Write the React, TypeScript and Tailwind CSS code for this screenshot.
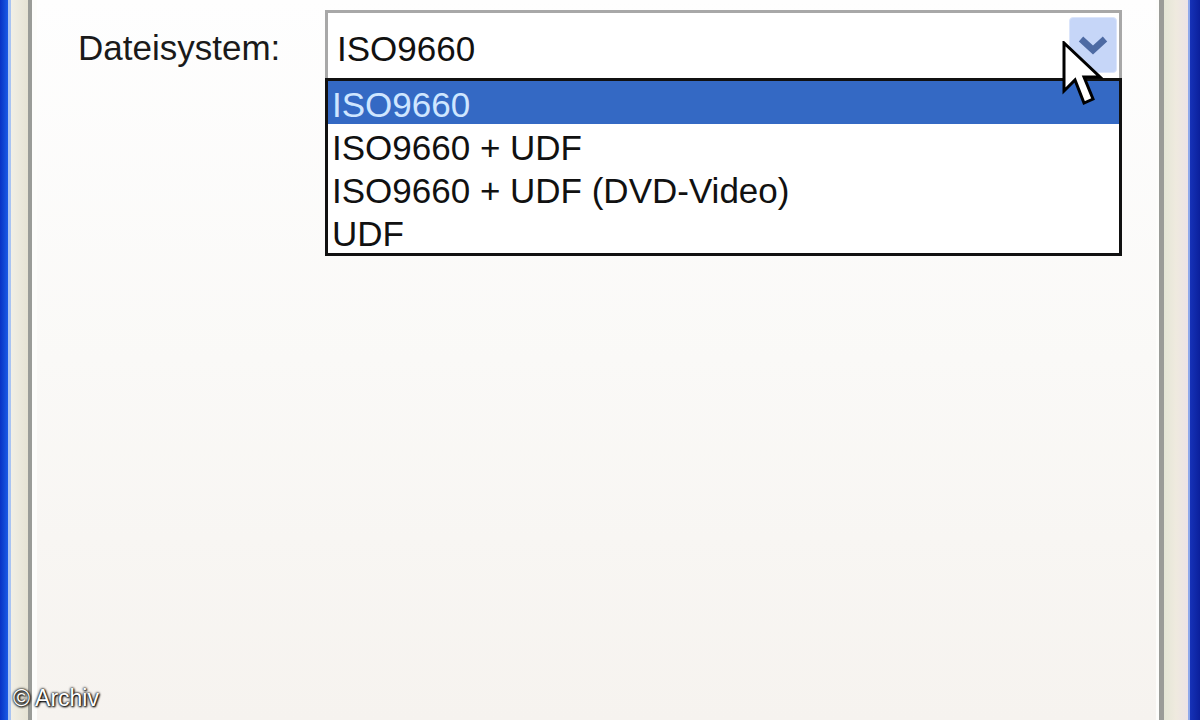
import React from "react";

const options = ["ISO9660", "ISO9660 + UDF", "ISO9660 + UDF (DVD-Video)", "UDF"];

const Chevron: React.FC = () => (
  <svg width="30" height="22" viewBox="0 0 30 22" aria-hidden="true">
    <path d="M3 4 L15 15 L27 4" fill="none" stroke="#4d6aa3" strokeWidth="6.5" strokeLinejoin="miter" />
  </svg>
);

const Cursor: React.FC = () => (
  <svg width="44" height="72" viewBox="0 0 44 72" aria-hidden="true">
    <path
      d="M2 2 L2 50 L13 39 L22 62 L31 58 L22 36 L38 36 Z"
      fill="#ffffff"
      stroke="#000000"
      strokeWidth="3"
      strokeLinejoin="miter"
    />
  </svg>
);

export default function App() {
  return (
    <div
      className="relative w-[1200px] h-[720px] overflow-hidden flex bg-[#f6f4f0]"
      style={{ fontFamily: '"Liberation Sans", Arial, sans-serif' }}
    >
      {/* left window frame */}
      <div className="flex h-full shrink-0">
        <div className="w-[8px] bg-gradient-to-r from-[#0831c4] to-[#1a5ae6]" />
        <div className="w-[3px] bg-[#a9c4f2]" />
        <div className="w-[17px] bg-gradient-to-r from-[#f1efe6] to-[#e6e3d4]" />
        <div className="w-[4px] bg-[#9a9c98]" />
        <div className="w-[5px] bg-[#fdfdfb]" />
      </div>

      {/* tab page */}
      <div className="flex-1 flex flex-col bg-gradient-to-b from-[#fefefe] via-[#faf9f7] to-[#f6f3ef]">
        <div className="flex items-start mt-[10px]">
          <div className="pl-[41px] w-[288px] pt-[20px] text-[35px] leading-[35px] text-[#1a1a1a]">
            Dateisystem:
          </div>
          <div className="w-[797px] flex flex-col">
            {/* closed combo */}
            <div className="h-[68px] border-t-[3px] border-x-[3px] border-[#a8a8a8] bg-white flex items-start">
              <div className="flex-1 pl-[9px] pt-[18px] text-[35px] leading-[35px] text-[#111]">ISO9660</div>
              <div className="mt-[4px] mr-[2px] w-[48px] h-[56px] rounded-[4px] bg-[#c6d6f8] border border-[#dbe5fb] flex items-center justify-center pt-[1px]">
                <Chevron />
              </div>
            </div>
            {/* open list */}
            <div className="border-[3px] border-[#111] bg-white flex flex-col">
              {options.map((opt, i) => (
                <div
                  key={opt}
                  className={
                    i === 0
                      ? "h-[43px] pl-[4px] pt-[6px] text-[35px] leading-[35px] bg-[#3469c4] text-[#cfe6ff]"
                      : "h-[43px] pl-[4px] pt-[6px] text-[35px] leading-[35px] text-[#111]"
                  }
                >
                  {opt}
                </div>
              ))}
            </div>
          </div>
        </div>
      </div>

      {/* right window frame */}
      <div className="flex h-full shrink-0">
        <div className="w-[3px] bg-[#fdfdfb]" />
        <div className="w-[5px] bg-[#9a9c98]" />
        <div className="w-[24px] bg-gradient-to-r from-[#e4e6d6] via-[#efeadf] to-[#ede3e6]" />
        <div className="w-[2px] bg-[#8fa8ea]" />
        <div className="w-[10px] bg-gradient-to-r from-[#1632b8] to-[#0b1f9c]" />
      </div>

      {/* mouse pointer over the drop button */}
      <div className="absolute left-[1062px] top-[41px]">
        <Cursor />
      </div>

      <div
        className="absolute left-[13px] top-[685px] text-[23px] leading-[26px] text-white"
        style={{ textShadow: "0 0 2px #000, 0 0 3px #000, 1px 1px 2px #000" }}
      >
        © Archiv
      </div>
    </div>
  );
}
